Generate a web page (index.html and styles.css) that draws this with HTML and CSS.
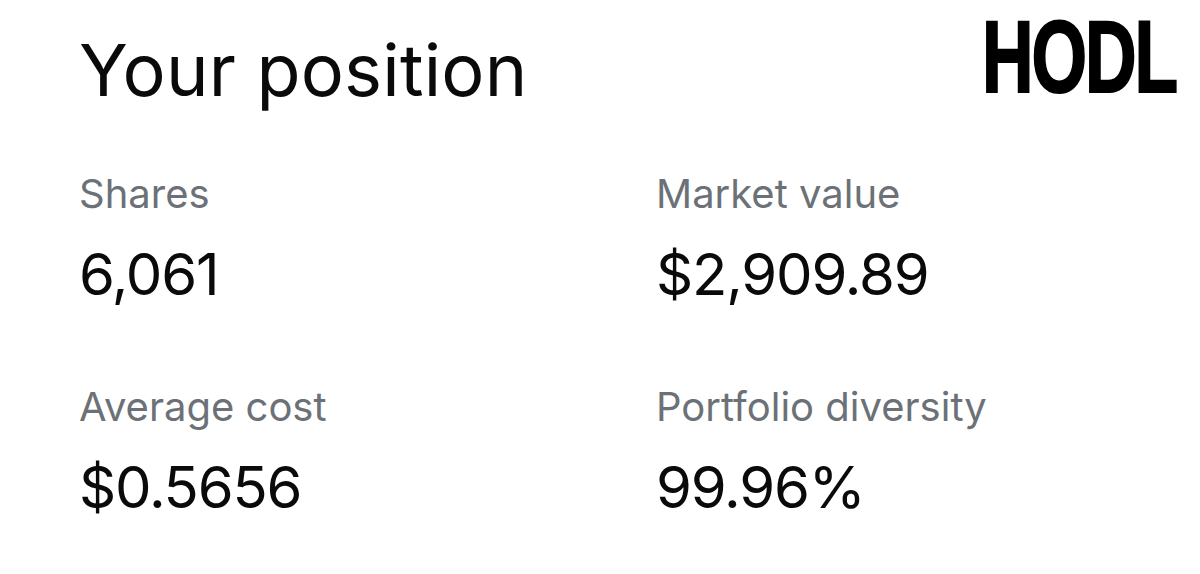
FILE: index.html
```html
<!DOCTYPE html>
<html>
<head>
<meta charset="utf-8">
<link rel="stylesheet" href="styles.css">
</head>
<body>
<div class="page">
  <header class="head">
    <h1 class="title">Your position</h1>
    <div class="hodl">HODL</div>
  </header>
  <div class="grid">
    <div class="stat">
      <div class="label">Shares</div>
      <div class="value">6,061</div>
    </div>
    <div class="stat">
      <div class="label">Market value</div>
      <div class="value">$2,909.89</div>
    </div>
    <div class="stat">
      <div class="label">Average cost</div>
      <div class="value">$0.5656</div>
    </div>
    <div class="stat">
      <div class="label">Portfolio diversity</div>
      <div class="value">99.96%</div>
    </div>
  </div>
</div>
</body>
</html>
```
FILE: styles.css
```css
html, body {
  margin: 0;
  background: #fff;
}
body {
  font-family: Inter, "Liberation Sans", sans-serif;
  color: #0a0a0a;
  width: 1200px;
  height: 574px;
  overflow: hidden;
}
.page {
  padding: 0 0 0 79px;
}
.head {
  display: flex;
  justify-content: space-between;
  align-items: flex-start;
  height: 166px;
}
.title {
  margin: 30px 0 0 0;
  font-size: 72px;
  font-weight: 400;
  line-height: 80px;
  letter-spacing: 0.2px;
}
.hodl {
  font-family: "Liberation Sans", sans-serif;
  font-weight: 700;
  font-size: 102px;
  line-height: 100px;
  margin: 7px 24px 0 0;
  transform: scaleX(0.7);
  transform-origin: right center;
  letter-spacing: -3px;
  -webkit-text-stroke: 2px #000;
  color: #000;
}
.grid {
  display: grid;
  grid-template-columns: 577px 1fr;
  row-gap: 65px;
}
.stat {
  display: flex;
  flex-direction: column;
}
.label {
  font-size: 40px;
  line-height: 56px;
  color: #6c7177;
}
.value {
  font-size: 58px;
  line-height: 80px;
  margin-top: 12px;
  letter-spacing: -1.2px;
}
```
